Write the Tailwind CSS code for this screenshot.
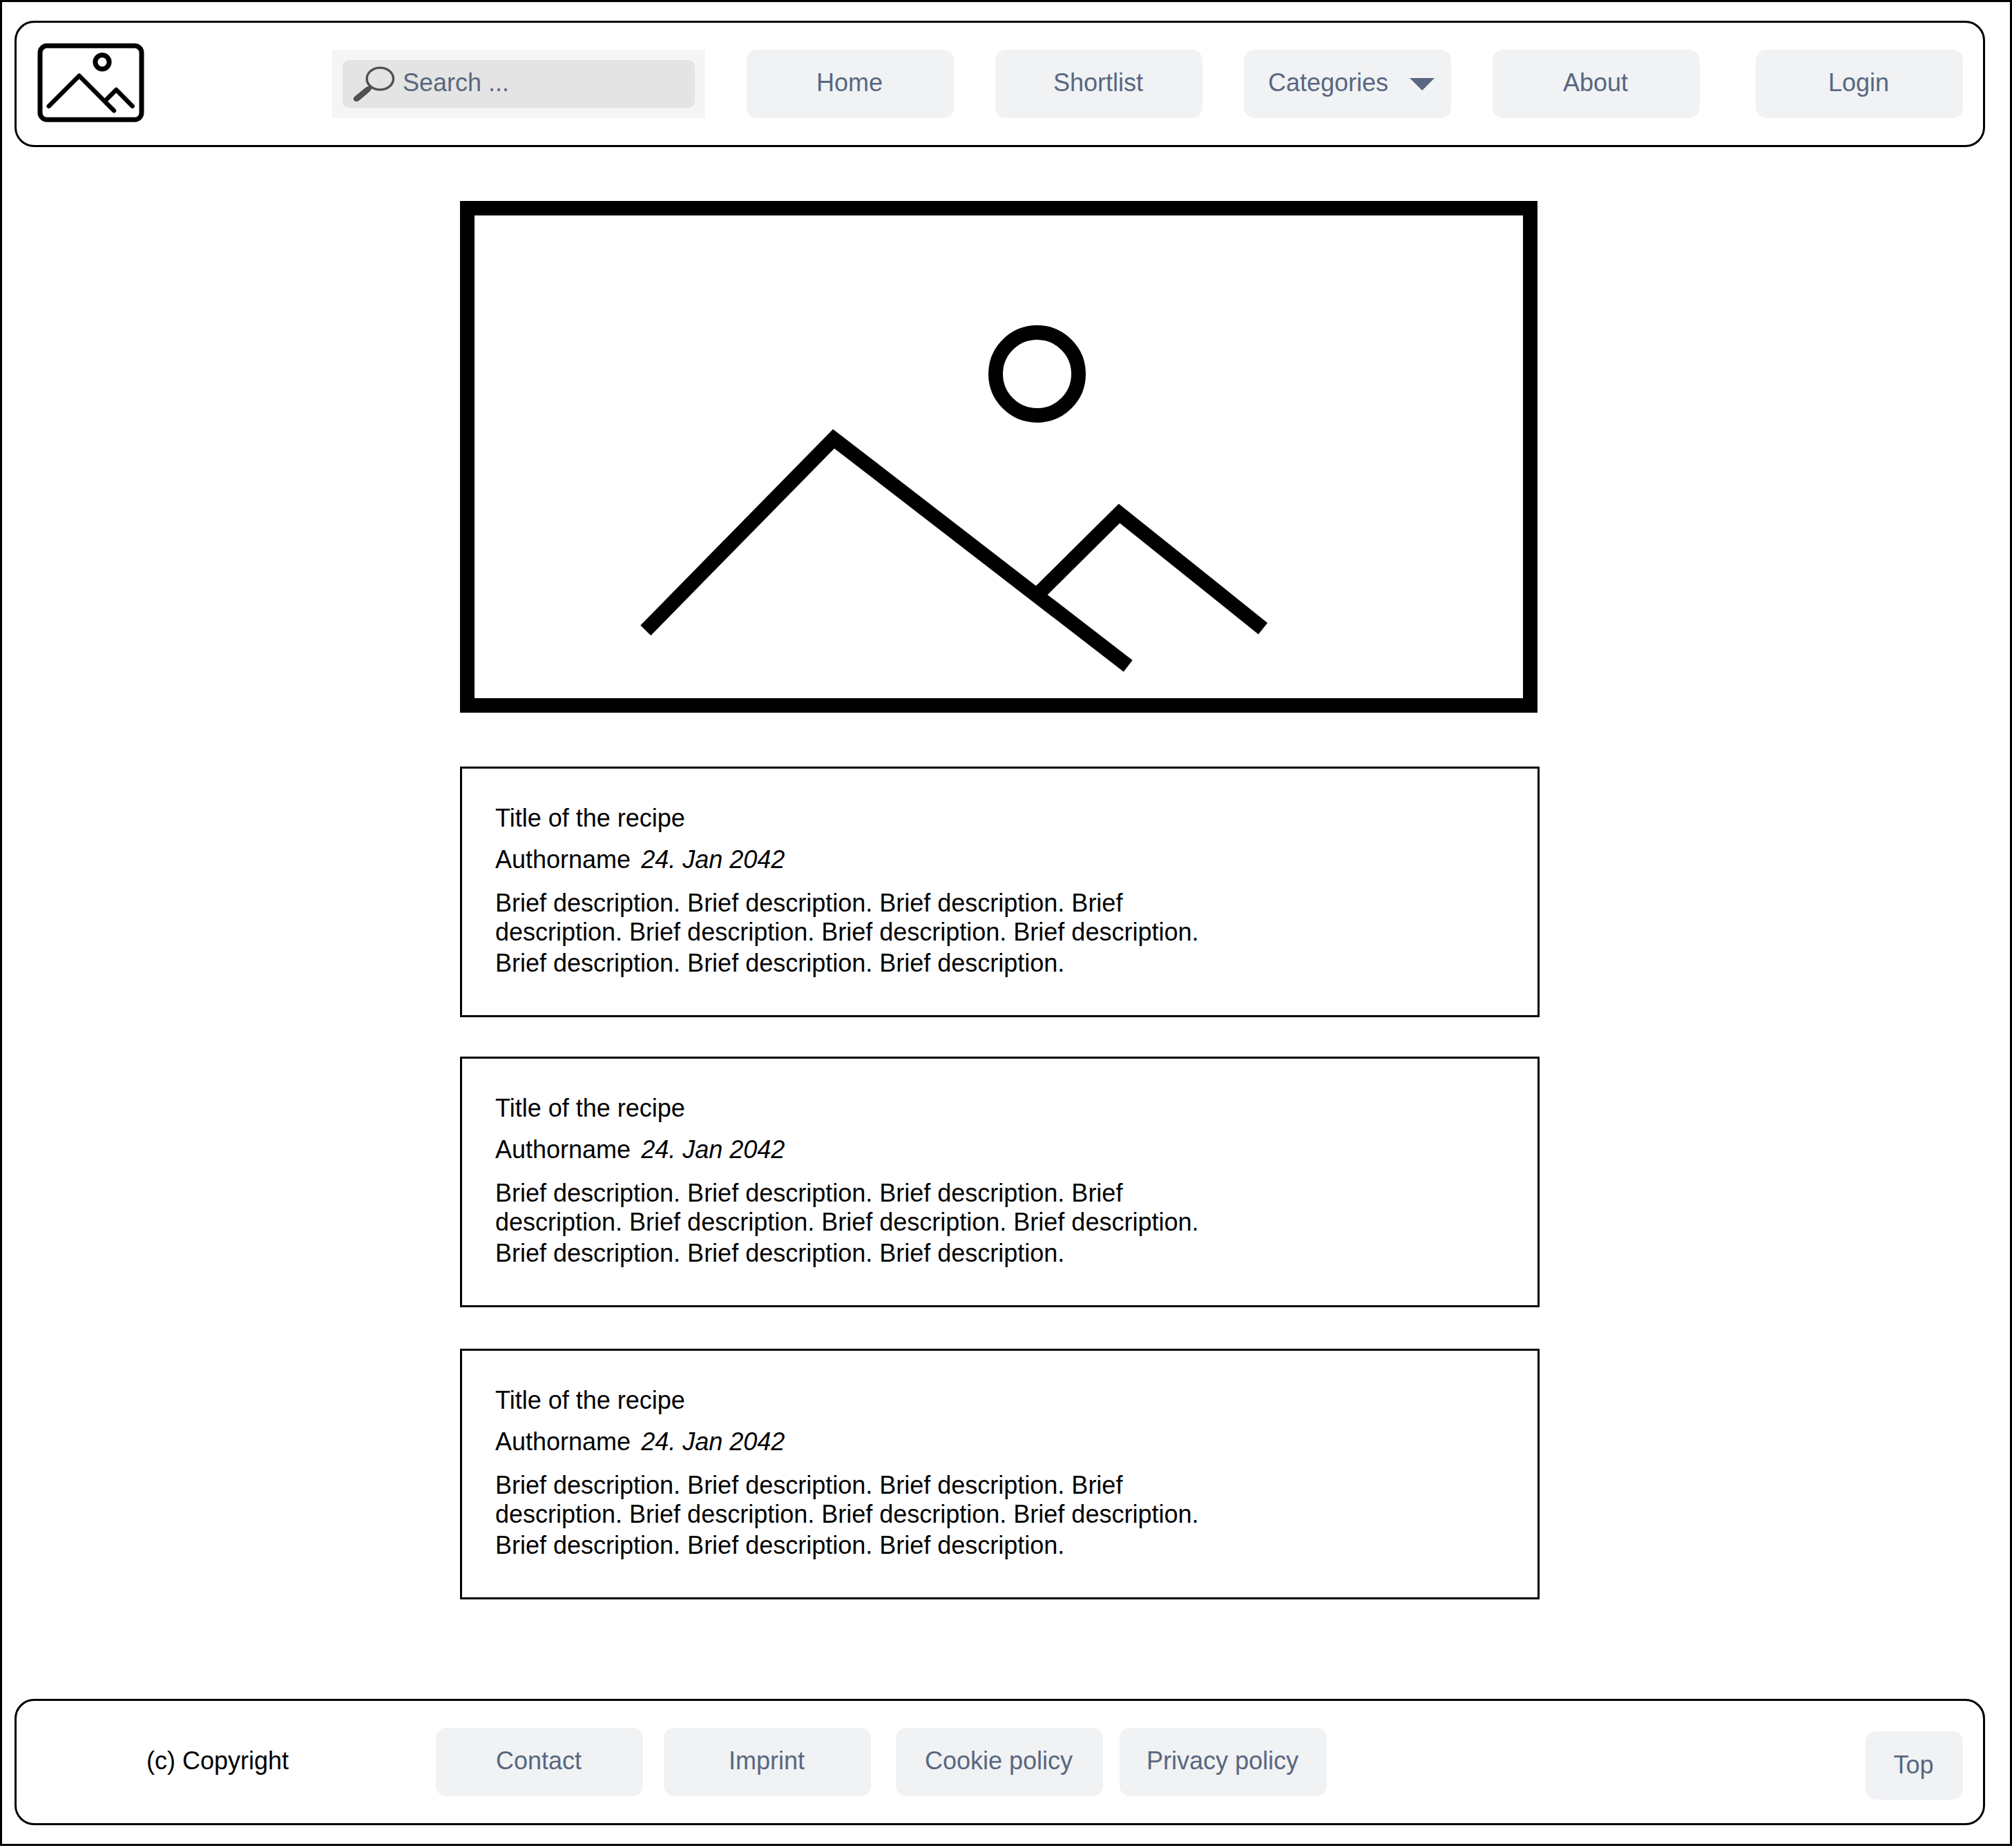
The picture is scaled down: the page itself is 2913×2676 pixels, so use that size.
<!DOCTYPE html>
<html lang="en">
<head>
<meta charset="utf-8">
<title>Recipes</title>
<script src="https://cdn.jsdelivr.net/npm/@tailwindcss/browser@4"></script>
</head>
<body class="bg-white">
<div class="flex h-[2673px] w-[2913px] flex-col border-3 border-black bg-white pt-[27px] pb-[27px] pl-[18px] pr-9 font-['Liberation_Sans',Arial,sans-serif] text-[36px] leading-[41px] text-black">

  <header class="flex h-[183px] w-[2853px] shrink-0 items-center rounded-[28.5px] border-3 border-black pl-[30px]">
    <svg class="h-[117px] w-[156px] shrink-0 overflow-visible" viewBox="54 63 156 117" fill="none" stroke="#000" stroke-width="7" stroke-linecap="round" stroke-linejoin="round">
      <rect x="58" y="66.3" width="147" height="107" rx="10"/>
      <circle cx="148" cy="89.8" r="10.1"/>
      <path d="M70.7 153.7 114.7 109.8 165 160.3" stroke-width="6.5"/>
      <path d="M152.5 145.8 168.3 130 191.7 153.7" stroke-width="6.5"/>
    </svg>
    <div class="ml-[271px] flex h-[99px] w-[540px] shrink-0 items-center justify-center bg-[#f5f5f5]">
      <div class="flex h-[69px] w-[510px] items-center rounded-[9px] bg-[#e4e4e4] pl-[15px]">
        <svg class="h-[54px] w-[62px] shrink-0 overflow-visible" viewBox="511.5 94.5 62 54">
          <ellipse cx="550.8" cy="113.5" rx="19.2" ry="15.9" fill="none" stroke="#505050" stroke-width="3.4"/>
          <path d="M513.8 139.6 528.6 127.2Q531.5 125 536.5 123.6L539 127.6Q536.6 132 533 134.6L520.2 145.2Q516.5 147.8 513.2 145.2 510.8 142.4 513.8 139.6Z" fill="#505050"/>
        </svg>
        <span class="ml-[10px] pb-1 text-[#596780]">Search ...</span>
      </div>
    </div>
    <nav class="ml-[60px] flex gap-[60px] text-[#596780]">
      <a class="flex h-[99px] w-[300px] items-center justify-center rounded-[15px] bg-[#f0f2f4] pr-[2px] pb-1">Home</a>
      <a class="flex h-[99px] w-[300px] items-center justify-center rounded-[15px] bg-[#f0f2f4] pr-[2px] pb-1">Shortlist</a>
      <a class="flex h-[99px] w-[300px] items-center justify-between rounded-[15px] bg-[#f0f2f4] pr-6 pl-[35px]">
        <span class="pb-1">Categories</span>
        <svg class="h-[18px] w-[36px]" viewBox="0 0 36 18"><path d="M0 0H36L18 18Z" fill="#596780"/></svg>
      </a>
      <a class="flex h-[99px] w-[300px] items-center justify-center rounded-[15px] bg-[#f0f2f4] pr-[2px] pb-1">About</a>
      <a class="ml-[21px] flex h-[99px] w-[300px] items-center justify-center rounded-[15px] bg-[#f0f2f4] pr-[2px] pb-1">Login</a>
    </nav>
  </header>

  <main class="ml-[645px] flex w-[1563px] shrink-0 flex-col pt-[78px]">
    <svg class="h-[741px] w-[1560px]" viewBox="666 291 1560 741" fill="none" stroke="#000" stroke-width="21">
      <rect x="676.5" y="301.5" width="1539" height="720"/>
      <circle cx="1501.5" cy="541.5" r="60"/>
      <path d="M934.8 912.9 1207 635.4 1633.2 964.4"/>
      <path d="M1503.5 859.5 1620.5 743.5 1828.5 910.2"/>
    </svg>

    <article class="mt-[78px] h-[363px] border-3 border-black pt-[51px] pl-12">
      <h2>Title of the recipe</h2>
      <p class="mt-[19px]">Authorname<em class="ml-[15px]">24. Jan 2042</em></p>
      <p class="mt-[22px]">Brief description. Brief description. Brief description. Brief</p>
      <p class="mt-px">description. Brief description. Brief description. Brief description.</p>
      <p class="mt-1">Brief description. Brief description. Brief description.</p>
    </article>
    <article class="mt-[57px] h-[363px] border-3 border-black pt-[51px] pl-12">
      <h2>Title of the recipe</h2>
      <p class="mt-[19px]">Authorname<em class="ml-[15px]">24. Jan 2042</em></p>
      <p class="mt-[22px]">Brief description. Brief description. Brief description. Brief</p>
      <p class="mt-px">description. Brief description. Brief description. Brief description.</p>
      <p class="mt-1">Brief description. Brief description. Brief description.</p>
    </article>
    <article class="mt-[60px] h-[363px] border-3 border-black pt-[51px] pl-12">
      <h2>Title of the recipe</h2>
      <p class="mt-[19px]">Authorname<em class="ml-[15px]">24. Jan 2042</em></p>
      <p class="mt-[22px]">Brief description. Brief description. Brief description. Brief</p>
      <p class="mt-px">description. Brief description. Brief description. Brief description.</p>
      <p class="mt-1">Brief description. Brief description. Brief description.</p>
    </article>
  </main>

  <footer class="mt-auto flex h-[183px] w-[2853px] shrink-0 items-center rounded-[28.5px] border-3 border-black pr-[29px] pl-[188px] text-[#596780]">
    <span class="w-[419px] pb-1 text-black">(c) Copyright</span>
    <a class="flex h-[99px] w-[300px] items-center justify-center rounded-[15px] bg-[#f0f2f4] pr-[2px] pb-1">Contact</a>
    <a class="ml-[30px] flex h-[99px] w-[300px] items-center justify-center rounded-[15px] bg-[#f0f2f4] pr-[2px] pb-1">Imprint</a>
    <a class="ml-9 flex h-[99px] w-[300px] items-center justify-center rounded-[15px] bg-[#f0f2f4] pr-[2px] pb-1">Cookie policy</a>
    <a class="ml-6 flex h-[99px] w-[300px] items-center justify-center rounded-[15px] bg-[#f0f2f4] pr-[2px] pb-1">Privacy policy</a>
    <a class="mt-[9px] ml-auto flex h-[99px] w-[141px] items-center justify-center rounded-[15px] bg-[#f0f2f4] pr-[2px] pb-px">Top</a>
  </footer>
</div>
</body>
</html>
